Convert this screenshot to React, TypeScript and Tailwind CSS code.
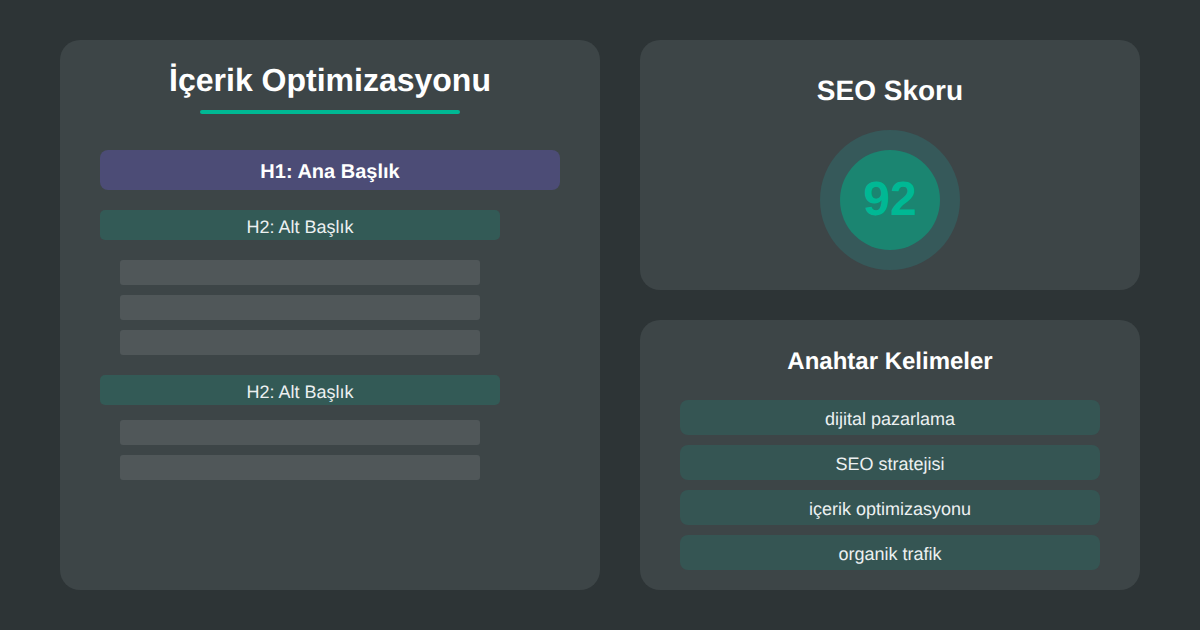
const H2 = ({ label }: { label: string }) => (
  <div className="flex h-[30px] w-[400px] items-center justify-center rounded-[5px] bg-[#335a56] pt-[4px] text-[18px] text-[#ecf0f1]">
    {label}
  </div>
);

const Lines = ({ count }: { count: number }) => (
  <div className="flex flex-col gap-[10px] pl-5">
    {Array.from({ length: count }).map((_, i) => (
      <div key={i} className="h-[25px] w-[360px] rounded-[3px] bg-[#505759]" />
    ))}
  </div>
);

const keywords = [
  "dijital pazarlama",
  "SEO stratejisi",
  "içerik optimizasyonu",
  "organik trafik",
];

export default function App() {
  return (
    <div
      className="flex h-[630px] w-[1200px] gap-10 overflow-hidden bg-[#2d3436] pt-10 pl-[60px] text-white [text-rendering:geometricPrecision]"
      style={{ fontFamily: '"Liberation Sans", Arial, sans-serif' }}
    >
      {/* Content structure */}
      <div className="flex h-[550px] w-[540px] flex-col rounded-[20px] bg-[#3d4547] px-10">
        <h1 className="mt-[20px] h-[40px] text-center text-[32px] leading-[40px] font-bold">
          İçerik Optimizasyonu
        </h1>
        <div className="mx-auto mt-[10px] h-1 w-[260px] rounded-sm bg-[#00b894]" />

        <div className="mt-9 flex h-10 w-[460px] items-center justify-center rounded-lg bg-[#4c4c76] pt-[4px] text-[20px] font-bold">
          H1: Ana Başlık
        </div>

        <div className="mt-5 flex flex-col gap-5">
          <H2 label="H2: Alt Başlık" />
          <Lines count={3} />
          <H2 label="H2: Alt Başlık" />
        </div>
        <div className="mt-[15px]">
          <Lines count={2} />
        </div>
      </div>

      <div className="flex w-[500px] flex-col gap-[30px]">
        {/* Score */}
        <div className="flex h-[250px] flex-col items-center rounded-[20px] bg-[#3d4547] pt-[30px]">
          <h2 className="h-10 pt-[1px] text-[28px] leading-10 font-bold">SEO Skoru</h2>
          <div className="mt-5 flex h-[140px] w-[140px] items-center justify-center rounded-full bg-[#36595a]">
            <div className="flex h-[100px] w-[100px] items-center justify-center rounded-full bg-[#1b8571] text-[48px] font-bold text-[#00b894]">
              92
            </div>
          </div>
        </div>

        {/* Keywords */}
        <div className="flex h-[270px] flex-col rounded-[20px] bg-[#3d4547] px-10 pt-[28px]">
          <h3 className="h-7 text-center text-[24px] leading-7 font-bold">
            Anahtar Kelimeler
          </h3>
          <div className="mt-6 flex flex-col gap-[10px]">
            {keywords.map((k) => (
              <div
                key={k}
                className="flex h-[35px] items-center justify-center rounded-lg bg-[#355553] pt-[4px] text-[18px] text-[#ecf0f1]"
              >
                {k}
              </div>
            ))}
          </div>
        </div>
      </div>
    </div>
  );
}
